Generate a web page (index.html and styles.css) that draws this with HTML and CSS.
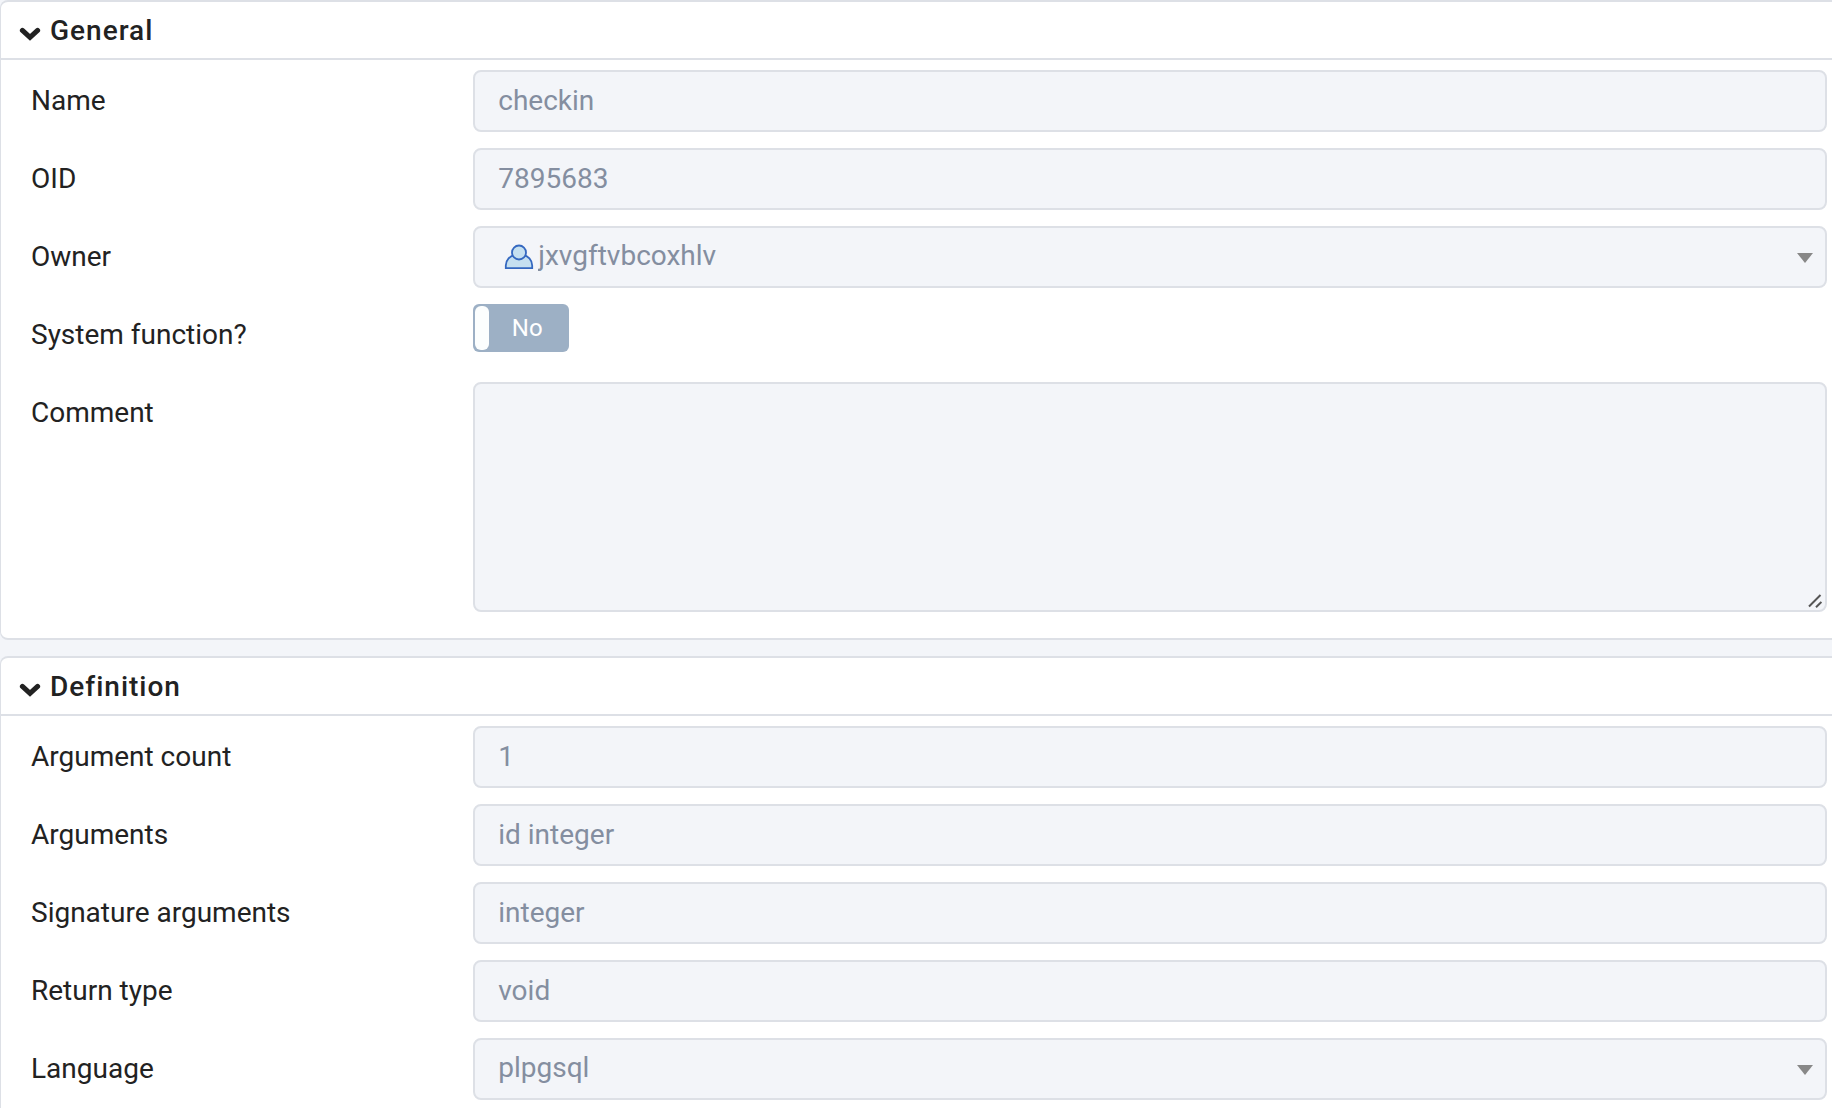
FILE: index.html
```html
<!DOCTYPE html>
<html lang="en">
    <head>
        <meta charset="utf-8">
        <title>Function properties</title>
        <link rel="stylesheet" href="styles.css">
    </head>

    <body>

        <details class="card" open>
            <summary class="card-header">
                <svg class="chevron" viewBox="0 0 22 16" aria-hidden="true"><path d="M3.4 4.4 11 11.4 18.6 4.4"/></svg>
                General
            </summary>
            <div class="card-body">
                <div class="row">
                    <label for="name">Name</label>
                    <input class="field" id="name" type="text" value="checkin" disabled>
                </div>
                <div class="row">
                    <label for="oid">OID</label>
                    <input class="field" id="oid" type="text" value="7895683" disabled>
                </div>
                <div class="row">
                    <label for="owner">Owner</label>
                    <div class="control">
                        <select class="field with-icon" id="owner" disabled>
                            <option>jxvgftvbcoxhlv</option>
                        </select>
                        <svg class="user-icon" viewBox="0 0 30 26" aria-hidden="true">
                            <path d="M1.8 24.2v-2.6c0-5.6 4.4-10 9-10.4h8.4c4.6.4 9 4.8 9 10.4v2.6z"/>
                            <circle cx="15" cy="8.5" r="7"/>
                        </svg>
                        <svg class="arrow" viewBox="0 0 16 10" aria-hidden="true"><path d="M0 0h16L8 10z"/></svg>
                    </div>
                </div>
                <div class="row">
                    <label for="system">System function?</label>
                    <div class="toggle">
                        <input class="toggle-input" id="system" type="checkbox" role="switch" disabled>
                        <span class="toggle-text">No</span>
                    </div>
                </div>
                <div class="row">
                    <label for="comment">Comment</label>
                    <div class="control">
                        <textarea class="field comment" id="comment" disabled></textarea>
                        <svg class="grip" viewBox="0 0 14 14" aria-hidden="true"><path d="M1 12.5 12.5 1M8 13.2 13.4 8"/></svg>
                    </div>
                </div>
            </div>
        </details>

        <details class="card" open>
            <summary class="card-header">
                <svg class="chevron" viewBox="0 0 22 16" aria-hidden="true"><path d="M3.4 4.4 11 11.4 18.6 4.4"/></svg>
                Definition
            </summary>
            <div class="card-body">
                <div class="row">
                    <label for="argcount">Argument count</label>
                    <input class="field" id="argcount" type="text" value="1" disabled>
                </div>
                <div class="row">
                    <label for="args">Arguments</label>
                    <input class="field" id="args" type="text" value="id integer" disabled>
                </div>
                <div class="row">
                    <label for="sigargs">Signature arguments</label>
                    <input class="field" id="sigargs" type="text" value="integer" disabled>
                </div>
                <div class="row">
                    <label for="returntype">Return type</label>
                    <input class="field" id="returntype" type="text" value="void" disabled>
                </div>
                <div class="row">
                    <label for="language">Language</label>
                    <div class="control">
                        <select class="field" id="language" disabled>
                            <option>plpgsql</option>
                        </select>
                        <svg class="arrow" viewBox="0 0 16 10" aria-hidden="true"><path d="M0 0h16L8 10z"/></svg>
                    </div>
                </div>
            </div>
        </details>

    </body>
</html>
```

FILE: styles.css
```css
* {
    box-sizing: border-box;
}

html {
    height: 100%;
    overflow: hidden;
}

body {
    margin: 0;
    height: 100%;
    overflow: hidden;
    background-color: #f3f5f9;
    color: #222222;
    font-family: Roboto, "Liberation Sans", sans-serif;
    font-size: 28px;
    line-height: 42px;
}

.card {
    margin-bottom: 16px;
    background-color: #ffffff;
    border: 2px solid #dde0e6;
    border-left-width: 1px;
    border-right: 0;
    border-radius: 8px 0 0 8px;
}

.card-header {
    display: flex;
    align-items: center;
    gap: 9px;
    height: 58px;
    padding-top: 2px;
    padding-left: 18px;
    border-bottom: 2px solid #dde0e6;
    font-weight: 500;
    letter-spacing: 1px;
    list-style: none;
    cursor: pointer;
}

.chevron {
    width: 22px;
    height: 16px;
    margin-top: 6px;
    fill: none;
    stroke: #222222;
    stroke-width: 5;
    stroke-linecap: round;
}

.card-body {
    display: flex;
    flex-direction: column;
    gap: 16px;
    padding: 10px 5px 26px 21px;
}

.row {
    display: grid;
    grid-template-columns: 1fr 3fr;
    align-items: start;
    min-height: 62px;
}

.row label {
    padding: 10px 9px;
}

.control {
    position: relative;
}

.field {
    display: block;
    width: 100%;
    height: 62px;
    margin: 0;
    padding: 0 23px 2px;
    background-color: #f3f5f9;
    border: 2px solid #dde0e6;
    border-radius: 8px;
    color: #848ea0;
    font: inherit;
    opacity: 1;
    appearance: none;
}

.with-icon {
    padding-left: 63px;
}

.comment {
    height: 230px;
    resize: none;
}

.user-icon {
    position: absolute;
    top: 18px;
    left: 31px;
    width: 30px;
    height: 26px;
    fill: #c5e0f0;
    stroke: #3468c0;
    stroke-width: 1.8;
}

.arrow {
    position: absolute;
    top: 27px;
    right: 14px;
    width: 16px;
    height: 10px;
    fill: #888888;
}

.grip {
    position: absolute;
    right: 5px;
    bottom: 4px;
    width: 14px;
    height: 14px;
    fill: none;
    stroke: #555555;
    stroke-width: 2;
}

.toggle {
    position: relative;
    width: 96px;
    height: 48px;
    padding: 2px;
    background-color: #9db0c5;
    border-radius: 6px;
}

.toggle-input {
    display: block;
    width: 14px;
    height: 44px;
    margin: 0;
    background-color: #fcfefe;
    border-radius: 6px;
    appearance: none;
}

.toggle-text {
    position: absolute;
    inset: 0 0 0 12px;
    color: #ffffff;
    font-size: 24px;
    line-height: 48px;
    text-align: center;
}
```
